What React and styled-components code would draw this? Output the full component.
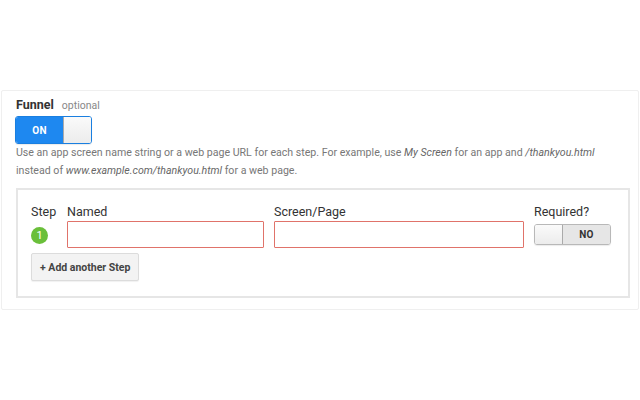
import React from "react";
import styled, { createGlobalStyle } from "styled-components";

const GlobalStyle = createGlobalStyle`
  html, body {
    margin: 0;
    padding: 0;
    background: #fff;
    font-family: Roboto, "Liberation Sans", Arial, sans-serif;
  }
`;

const Page = styled.div`
  width: 640px;
  height: 400px;
  padding: 90px 1px 0 1px;
  box-sizing: border-box;
`;

const Card = styled.div`
  border: 1px solid #efefef;
  border-radius: 2px;
  padding: 6px 14px 11px 13px;
`;

const TitleRow = styled.div`
  display: flex;
  align-items: baseline;
  gap: 8px;
  line-height: 16px;
  padding-left: 1px;
`;

const Title = styled.span`
  font-size: 12.5px;
  font-weight: 700;
  color: #333;
`;

const Optional = styled.span`
  font-size: 10.5px;
  color: #888;
`;

const Toggle = styled.div`
  display: flex;
  width: 77px;
  height: ${({ $h }) => $h}px;
  border-radius: 3px;
  overflow: hidden;
  border: 1px solid ${({ $on }) => ($on ? "#1a7fe0" : "#b8b8b8")};
  box-sizing: border-box;
  margin-top: ${({ $mt }) => $mt || 0}px;
  box-shadow: 0 1px 1px rgba(0, 0, 0, 0.08);
`;

const ToggleLabel = styled.div`
  flex: 0 0 47px;
  display: flex;
  align-items: center;
  justify-content: center;
  font-size: 10px;
  font-weight: 700;
  letter-spacing: 0.2px;
  color: ${({ $on }) => ($on ? "#fff" : "#333")};
  background: ${({ $on }) => ($on ? "#1e88f0" : "#e6e6e6")};
`;

const Knob = styled.div`
  flex: 1;
  background: linear-gradient(#fafafa, #ececec);
  border-left: ${({ $side }) => ($side === "left" ? "1px solid #aaa" : "none")};
  border-right: ${({ $side }) => ($side === "right" ? "1px solid #aaa" : "none")};
`;

const Help = styled.p`
  margin: 0 0 0 1px;
  font-size: 10.6px;
  line-height: 17.5px;
  color: #777;
  em {
    font-style: italic;
    color: #666;
  }
`;

const Steps = styled.div`
  margin: 9px 0 0 1px;
  width: 614px;
  box-sizing: border-box;
  border: 2px solid #e6e6e6;
  padding: 14px 0 15px 13px;
`;

const Grid = styled.div`
  display: grid;
  grid-template-columns: 26px 197px 250px 77px;
  column-gap: 10px;
  row-gap: 1px;
  align-items: center;
`;

const Label = styled.div`
  font-size: 12.5px;
  line-height: 16px;
  color: #333;
`;

const StepNum = styled.div`
  width: 17px;
  height: 17px;
  border-radius: 50%;
  background: #6abf3a;
  color: #fff;
  font-size: 11px;
  display: flex;
  align-items: center;
  justify-content: center;
  margin-top: 2px;
`;

const Input = styled.input`
  height: 27px;
  width: 100%;
  box-sizing: border-box;
  border: 1px solid #e0736a;
  border-radius: 1px;
  outline: none;
  padding: 0 6px;
  font-family: inherit;
  font-size: 12px;
`;

const AddButton = styled.button`
  margin-top: 5px;
  height: 28px;
  padding: 0 8px;
  background: #f3f3f3;
  border: 1px solid #dcdcdc;
  border-radius: 2px;
  font-family: inherit;
  font-size: 10.5px;
  font-weight: 700;
  color: #444;
  box-shadow: 0 1px 1px rgba(0, 0, 0, 0.06);
`;

const App = () => (
  <>
    <GlobalStyle />
    <Page>
      <Card>
        <TitleRow>
          <Title>Funnel</Title>
          <Optional>optional</Optional>
        </TitleRow>
        <Toggle $on $h={28} $mt={2}>
          <ToggleLabel $on>ON</ToggleLabel>
          <Knob $side="left" />
        </Toggle>
        <Help>
          Use an app screen name string or a web page URL for each step. For example, use{" "}
          <em>My Screen</em> for an app and <em>/thankyou.html</em>
          <br />
          instead of <em>www.example.com/thankyou.html</em> for a web page.
        </Help>
        <Steps>
          <Grid>
            <Label>Step</Label>
            <Label>Named</Label>
            <Label>Screen/Page</Label>
            <Label>Required?</Label>
            <StepNum>1</StepNum>
            <Input />
            <Input />
            <Toggle $h={21}>
              <Knob $side="right" />
              <ToggleLabel>NO</ToggleLabel>
            </Toggle>
          </Grid>
          <AddButton>+ Add another Step</AddButton>
        </Steps>
      </Card>
    </Page>
  </>
);

export default App;
